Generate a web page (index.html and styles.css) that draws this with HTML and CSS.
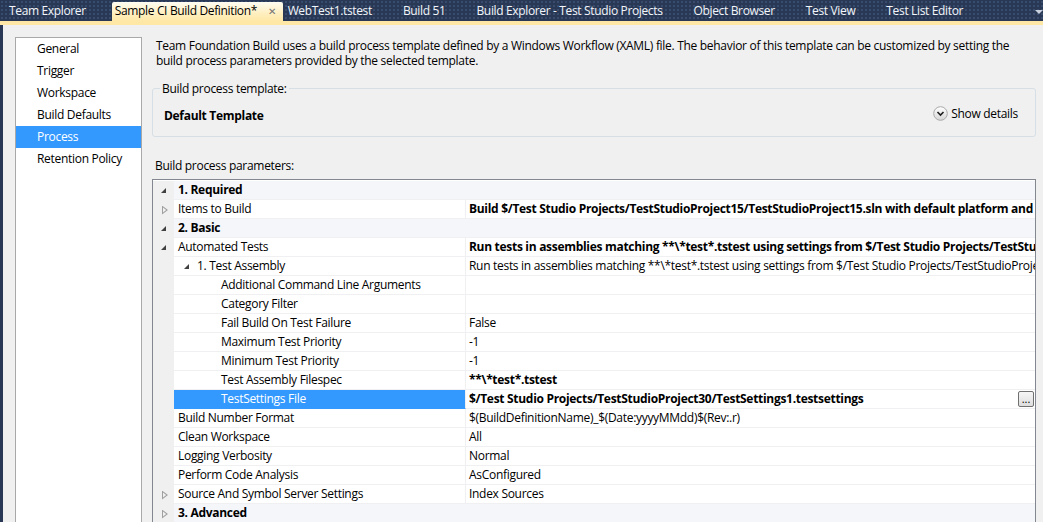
FILE: index.html
```html
<!DOCTYPE html>
<html lang="en">
<head>
<meta charset="utf-8">
<title>Sample CI Build Definition</title>
<link rel="stylesheet" href="styles.css">
</head>
<body>
<div class="tabbar">
  <div class="tab">Team Explorer</div>
  <div class="tab active">Sample CI Build Definition*<span class="close">&#x2715;</span></div>
  <div class="tab after-active">WebTest1.tstest</div>
  <div class="tab">Build 51</div>
  <div class="tab">Build Explorer - Test Studio Projects</div>
  <div class="tab">Object Browser</div>
  <div class="tab">Test View</div>
  <div class="tab">Test List Editor</div>
  <svg class="tab-drop" width="8" height="5" viewBox="0 0 8 5"><polygon points="0,0 8,0 4,4" fill="#C9D1DE"/></svg>
</div>
<div class="tabstrip"></div>
<div class="main">
  <nav class="nav">
    <div class="nav-item">General</div>
    <div class="nav-item">Trigger</div>
    <div class="nav-item">Workspace</div>
    <div class="nav-item">Build Defaults</div>
    <div class="nav-item selected">Process</div>
    <div class="nav-item">Retention Policy</div>
  </nav>
  <section class="content">
    <p class="desc">Team Foundation Build uses a build process template defined by a Windows Workflow (XAML) file. The behavior of this template can be customized by setting the build process parameters provided by the selected template.</p>
    <fieldset class="tpl">
      <legend>Build process template:</legend>
      <div class="tpl-row">
        <span class="tpl-name">Default Template</span>
        <span class="details">
          <svg width="15" height="15" viewBox="0 0 15 15">
            <defs><linearGradient id="g" x1="0" y1="0" x2="0" y2="1"><stop offset="0" stop-color="#FFFFFF"/><stop offset="1" stop-color="#D6D6D6"/></linearGradient></defs>
            <circle cx="7.5" cy="7.5" r="6.8" fill="url(#g)" stroke="#A9A9A9"/>
            <polyline points="4.5,6 7.5,9 10.5,6" fill="none" stroke="#1E1E1E" stroke-width="1.6"/>
          </svg>
          Show details
        </span>
      </div>
    </fieldset>
    <div class="params-label">Build process parameters:</div>
    <div class="grid">
      <div class="row cat"><span class="gut"><i class="exp"></i></span><span class="name">1. Required</span></div>
      <div class="row"><span class="gut"><i class="col"></i></span><span class="name">Items to Build</span><span class="val b">Build $/Test Studio Projects/TestStudioProject15/TestStudioProject15.sln with default platform and configuration</span></div>
      <div class="row cat"><span class="gut"><i class="exp"></i></span><span class="name">2. Basic</span></div>
      <div class="row"><span class="gut"><i class="exp"></i></span><span class="name">Automated Tests</span><span class="val b">Run tests in assemblies matching **\*test*.tstest using settings from $/Test Studio Projects/TestStudioProject30/TestSettings1.testsettings</span></div>
      <div class="row"><span class="gut"></span><span class="name l1"><i class="exp"></i>1. Test Assembly</span><span class="val">Run tests in assemblies matching **\*test*.tstest using settings from $/Test Studio Projects/TestStudioProject30/TestSettings1.testsettings</span></div>
      <div class="row"><span class="gut"></span><span class="name l2">Additional Command Line Arguments</span><span class="val"></span></div>
      <div class="row"><span class="gut"></span><span class="name l2">Category Filter</span><span class="val"></span></div>
      <div class="row"><span class="gut"></span><span class="name l2">Fail Build On Test Failure</span><span class="val">False</span></div>
      <div class="row"><span class="gut"></span><span class="name l2">Maximum Test Priority</span><span class="val">-1</span></div>
      <div class="row"><span class="gut"></span><span class="name l2">Minimum Test Priority</span><span class="val">-1</span></div>
      <div class="row"><span class="gut"></span><span class="name l2">Test Assembly Filespec</span><span class="val b">**\*test*.tstest</span></div>
      <div class="row"><span class="gut"></span><span class="name l2 sel">TestSettings File</span><span class="val b"><span class="txt">$/Test Studio Projects/TestStudioProject30/TestSettings1.testsettings</span><span class="dots">...</span></span></div>
      <div class="row"><span class="gut"></span><span class="name">Build Number Format</span><span class="val">$(BuildDefinitionName)_$(Date:yyyyMMdd)$(Rev:.r)</span></div>
      <div class="row"><span class="gut"></span><span class="name">Clean Workspace</span><span class="val">All</span></div>
      <div class="row"><span class="gut"></span><span class="name">Logging Verbosity</span><span class="val">Normal</span></div>
      <div class="row"><span class="gut"></span><span class="name">Perform Code Analysis</span><span class="val">AsConfigured</span></div>
      <div class="row"><span class="gut"><i class="col"></i></span><span class="name">Source And Symbol Server Settings</span><span class="val">Index Sources</span></div>
      <div class="row cat"><span class="gut"><i class="col"></i></span><span class="name">3. Advanced</span></div>
    </div>
  </section>
</div>
</body>
</html>
```
FILE: styles.css
```css
* { box-sizing: border-box; }
html, body { margin: 0; padding: 0; }
body {
  width: 1043px;
  height: 522px;
  overflow: hidden;
  background: #F0F0F0;
  font-family: "Segoe UI", "Open Sans", sans-serif;
  font-size: 12px;
  letter-spacing: -0.3px;
  color: #000;
}

/* ---------- tab bar ---------- */
.tabbar {
  height: 21px;
  display: flex;
  align-items: flex-end;
  padding-left: 4px;
  background-color: #293955;
  background-image: radial-gradient(circle, #3A4D6E 0.7px, transparent 0.9px);
  background-size: 4px 4px;
  position: relative;
}
.tab {
  height: 19px;
  line-height: 18px;
  padding: 0 5px;
  margin-right: 21px;
  color: #F2F5FA;
  white-space: nowrap;
  letter-spacing: -0.35px;
}
.tab.active {
  margin-right: 0;
  padding: 0 7px 0 3px;
  background: linear-gradient(#FFFCF2, #FFEFC0 60%, #FFE8A6);
  color: #000;
  border-radius: 2px 2px 0 0;
}
.close {
  display: inline-block;
  margin-left: 11px;
  color: #757575;
  font-size: 10px;
}
.tab-drop {
  position: absolute;
  right: 0;
  top: 10px;
}
.tabstrip {
  height: 4px;
  background: #FFE8A6;
}

/* ---------- main ---------- */
.main {
  display: flex;
  height: 497px;
  padding: 12px 7px 0 12px;
  border-left: 3px solid #293955;
  gap: 10px;
}
.nav {
  width: 127px;
  flex: none;
  background: #FFFFFF;
  border: 1px solid #A9A9A9;
  border-bottom: none;
}
.nav-item {
  height: 22px;
  line-height: 22px;
  padding-left: 21px;
}
.nav-item.selected {
  background: #3399FF;
  color: #FFFFFF;
}

.content {
  flex: 1;
  min-width: 0;
}
.desc {
  margin: 1px 0 0;
  padding-left: 4px;
  line-height: 15px;
}
.tpl {
  margin: 13px 0 0;
  padding: 0 17px 2px 11px;
  border: 1px solid #D5DFE5;
  border-radius: 3px;
}
.tpl legend {
  margin-left: -4px;
  padding: 0 2px;
  line-height: 15px;
}
.tpl-row {
  height: 38px;
  display: flex;
  align-items: center;
  justify-content: space-between;
}
.tpl-name { font-weight: bold; }
.details {
  display: flex;
  align-items: center;
  gap: 3px;
  margin-top: -3px;
}

.params-label {
  margin-top: 21px;
  padding-left: 3px;
  line-height: 15px;
}

/* ---------- property grid ---------- */
.grid {
  margin-top: 6px;
  border: 1px solid #828790;
  border-bottom: none;
  padding-top: 1px;
  background: #FFFFFF;
}
.row {
  display: grid;
  grid-template-columns: 21px 292px 1fr;
  height: 19px;
  line-height: 18px;
}
.gut {
  background: #F0F0F0;
  position: relative;
}
.name, .val {
  border-bottom: 1px solid #F0F0F2;
  white-space: nowrap;
  overflow: hidden;
}
.name {
  padding-left: 4px;
  border-right: 1px solid #F0F0F2;
  display: flex;
  align-items: center;
}
.val {
  padding-left: 3px;
  display: flex;
  align-items: center;
}
.val .txt { flex: 1; overflow: hidden; }
.b { font-weight: bold; }
.row.cat .name {
  grid-column: 2 / 4;
  font-weight: bold;
  background: #F4F6FA;
  border-right: none;
}
.l1 { padding-left: 10px; }
.l2 { padding-left: 47px; }
.name.sel {
  background: #3399FF;
  color: #FFFFFF;
  border-bottom-color: #3399FF;
}

/* expander glyphs */
.exp, .col {
  display: block;
  width: 0;
  height: 0;
}
.gut .exp, .gut .col {
  position: absolute;
  top: 50%;
}
.exp {
  border-style: solid;
  border-width: 0 0 5px 5px;
  border-color: transparent transparent #404040 transparent;
}
.gut .exp { left: 8px; margin-top: -3px; }
.name .exp { margin-right: 8px; margin-top: 1px; }
.col {
  width: 6px;
  height: 9px;
  background: #A0A0A0;
  clip-path: polygon(0 0, 100% 50%, 0 100%, 0 0, 1px 2px, 1px calc(100% - 2px), calc(100% - 1.8px) 50%, 1px 2px);
}
.gut .col { left: 9px; margin-top: -4px; }

.dots {
  flex: none;
  width: 16px;
  height: 16px;
  margin-right: 1px;
  border: 1px solid #707070;
  border-radius: 2px;
  background: linear-gradient(#F6F6F6, #DDDDDD);
  font-weight: normal;
  font-size: 11px;
  line-height: 14px;
  letter-spacing: 0;
  text-align: center;
}
```
